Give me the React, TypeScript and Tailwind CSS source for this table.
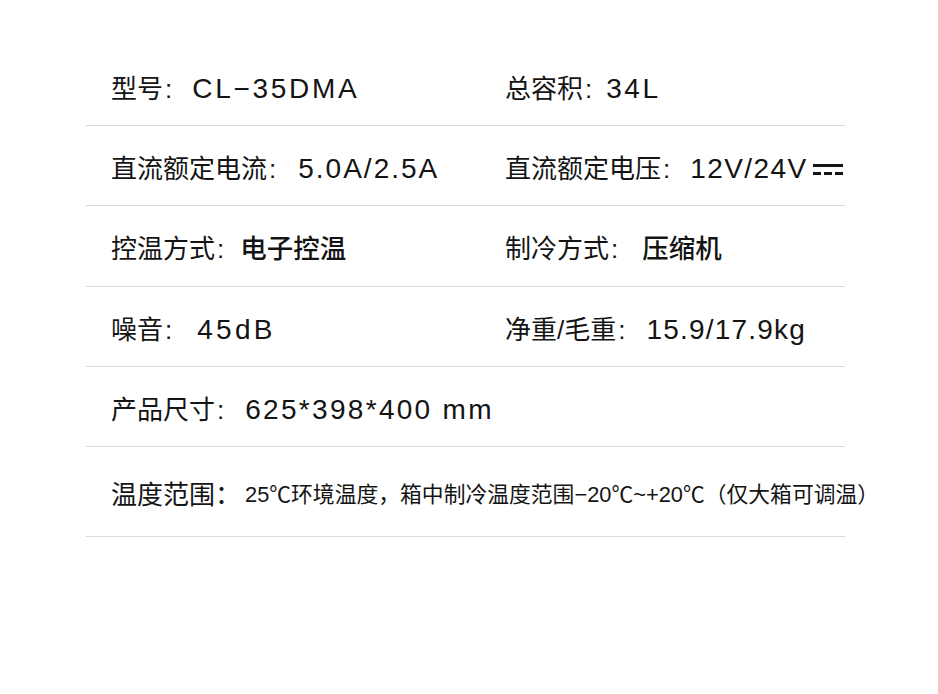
const font = { fontFamily: '"Liberation Sans", "Noto Sans CJK SC", sans-serif' }

type Spec = {
  label: string
  value: React.ReactNode
  gap: string
  valueClass?: string
}

function Item({ label, value, gap, valueClass = '' }: Spec) {
  return (
    <div className="flex items-center whitespace-nowrap">
      <span className="text-[26px] leading-none">{label}</span>
      <span className="text-[26px] leading-none ml-[2px]">:</span>
      <span className={`leading-none ${gap} ${valueClass}`}>{value}</span>
    </div>
  )
}

function DcMark() {
  return (
    <svg width="30" height="12" viewBox="0 0 30 12" className="ml-[6px] mt-[2px]">
      <rect x="0" y="0" width="30" height="3" fill="#141414" />
      <rect x="0" y="8" width="8" height="3" fill="#141414" />
      <rect x="11" y="8" width="8" height="3" fill="#141414" />
      <rect x="22" y="8" width="8" height="3" fill="#141414" />
    </svg>
  )
}

function Row({ children, h = 'h-[80px]' }: { children: React.ReactNode; h?: string }) {
  return (
    <div className={`${h} border-b border-[#d9d9d9] pl-[25px] grid grid-cols-[394px_1fr] items-center pt-[6px]`}>
      {children}
    </div>
  )
}

export default function App() {
  return (
    <div className="w-[938px] h-[694px] bg-white text-[#141414] overflow-hidden" style={font}>
      <div className="ml-[86px] w-[759px] pt-[46px]">
        <Row>
          <Item label="型号" value="CL−35DMA" gap="ml-[20px]" valueClass="text-[28px] tracking-[2.7px]" />
          <Item label="总容积" value="34L" gap="ml-[14px]" valueClass="text-[28px] tracking-[2.5px]" />
        </Row>

        <Row>
          <Item label="直流额定电流" value="5.0A/2.5A" gap="ml-[22px]" valueClass="text-[28px] tracking-[2px]" />
          <div className="flex items-center">
            <Item label="直流额定电压" value="12V/24V" gap="ml-[20px]" valueClass="text-[28px] tracking-[1.4px]" />
            <DcMark />
          </div>
        </Row>

        <Row h="h-[81px]">
          <Item label="控温方式" value="电子控温" gap="ml-[16px]" valueClass="text-[26.5px] font-medium" />
          <Item label="制冷方式" value="压缩机" gap="ml-[24px]" valueClass="text-[26.5px] font-medium" />
        </Row>

        <Row>
          <Item label="噪音" value="45dB" gap="ml-[25px]" valueClass="text-[28px] tracking-[3.3px]" />
          <Item label="净重/毛重" value="15.9/17.9kg" gap="ml-[21px]" valueClass="text-[28px] tracking-[1.2px]" />
        </Row>

        <Row>
          <div className="col-span-2">
            <Item label="产品尺寸" value="625*398*400 mm" gap="ml-[21px]" valueClass="text-[28px] tracking-[2.3px]" />
          </div>
        </Row>

        <Row h="h-[90px]">
          <div className="col-span-2 flex items-center whitespace-nowrap">
            <span className="text-[26px] leading-none">温度范围：</span>
            <span className="text-[21.8px] leading-none ml-[4px]">25℃环境温度，箱中制冷温度范围−20℃~+20℃（仅大箱可调温）</span>
          </div>
        </Row>
      </div>
    </div>
  )
}
